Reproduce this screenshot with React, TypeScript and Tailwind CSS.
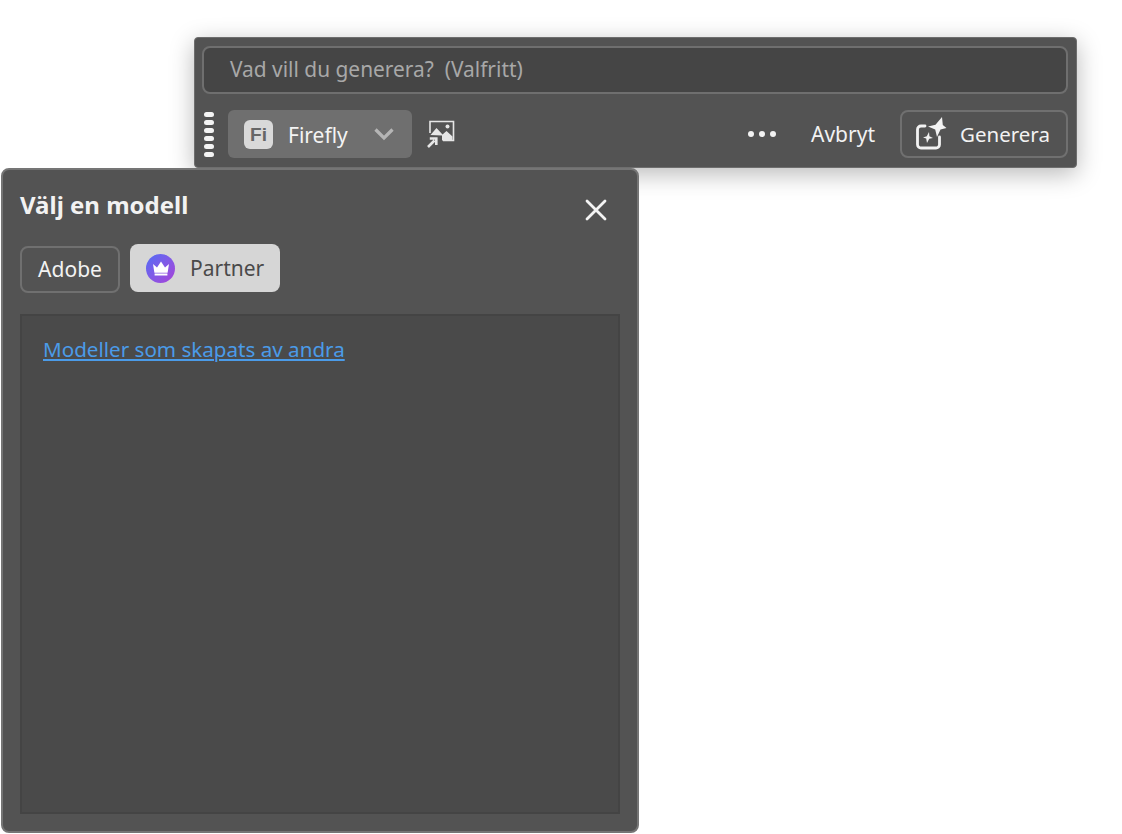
import React from "react";

const font = "font-['Noto_Sans','Lato',sans-serif]";

const GripDots: React.FC = () => (
  <div className="flex w-[10px] flex-col gap-[3px]">
    {[0, 1, 2, 3, 4, 5].map((i) => (
      <div key={i} className="h-[5px] w-[10px] rounded-full bg-[#f4f4f4]" />
    ))}
  </div>
);

const FireflyIcon: React.FC = () => (
  <div className="relative flex h-[29px] w-[29px] items-center justify-center rounded-[6px] bg-[#d9d9d9]">
    <span className="font-['Liberation_Sans',sans-serif] text-[19px] font-bold leading-none text-[#666666]">Fi</span>
    <div className="absolute right-[6px] top-[5px] h-[3px] w-[3px] rounded-full bg-[#d9d9d9]" />
  </div>
);

const ImageExpandIcon: React.FC = () => (
  <svg width="28" height="28" viewBox="0 0 28 28" fill="none">
    <path d="M3 13V1.5h23.5V20.5H16" stroke="#e6e6e6" strokeWidth="1.6" fill="none" />
    <path fillRule="evenodd" fill="#e6e6e6" d="M3.5 15l6-7 6 6.5 4-3.5 6 5.5v4H15V15.5z" />
    <circle cx="20.5" cy="6.5" r="2" fill="#e6e6e6" />
    <path d="M1 27l6.5-6.5M2.8 18.5h6.5v6.5" stroke="#e6e6e6" strokeWidth="2.6" fill="none" />
  </svg>
);

const GenerateIcon: React.FC = () => (
  <svg width="32" height="34" viewBox="0 0 32 34" fill="none">
    <path d="M10 9H6a3.5 3.5 0 0 0-3.5 3.5v15A3.5 3.5 0 0 0 6 31h15a3.5 3.5 0 0 0 3.5-3.5V20" stroke="#f2f2f2" strokeWidth="2.8" strokeLinecap="round" />
    <path fill="#f2f2f2" d="M27 0l.8 8 3.7 3-6 1.6L22 20l-1.8-7.4L13 9.6l7.5-1.8z" />
    <path fill="#f2f2f2" d="M14 15l.4 4.2 3.6 1.8-3.8.8L12 26l-.8-4.4L8 20.5l3.8-1.2z" />
  </svg>
);

const CrownBadge: React.FC = () => (
  <div className="flex h-[29px] w-[29px] items-center justify-center rounded-full bg-gradient-to-br from-[#4b6bf5] to-[#a63fd8]">
    <svg width="18" height="15" viewBox="0 0 18 15">
      <path fill="#fff" d="M1 3l4 3.5L9 .5l4 6L17 3l-1.4 8.8H2.4zM2.6 12.6h12.8V14.5H2.6z" />
    </svg>
  </div>
);

const Toolbar: React.FC = () => (
  <div className="ml-[194px] flex h-[131px] w-[883px] flex-col rounded-[4px] border border-[#6e6e6e] bg-[#535353] pl-[7px] pr-[8px] pt-[8px] shadow-[0_6px_24px_rgba(0,0,0,0.28)]">
    <div className="flex h-[48px] items-center rounded-[8px] border-2 border-[#6f6f6f] bg-[#454545] pl-[26px] text-[20.9px] text-[#a8a8a8]">
      <span className="whitespace-pre">Vad vill du generera?  (Valfritt)</span>
    </div>
    <div className="mt-[16px] flex items-center">
      <div className="ml-[2px]"><GripDots /></div>
      <button type="button" className="ml-[14px] flex h-[48px] w-[184px] items-center rounded-[6px] bg-[#6f6f6f] pl-[16px] text-[#f4f4f4]">
        <FireflyIcon />
        <span className="ml-[15px] mt-[4px] text-[21px]">Firefly</span>
        <svg className="ml-[25px]" width="22" height="14" viewBox="0 0 22 14" fill="none">
          <path d="M2.5 2.5L11 11l8.5-8.5" stroke="#b5b5b5" strokeWidth="3.2" />
        </svg>
      </button>
      <div className="ml-[15px] flex"><ImageExpandIcon /></div>
      <div className="ml-auto flex items-center gap-[5px]">
        {[0, 1, 2].map((i) => (
          <div key={i} className="h-[6px] w-[6px] rounded-full bg-[#f2f2f2]" />
        ))}
      </div>
      <span className="ml-[35px] mt-[2px] text-[21px] text-[#f2f2f2]">Avbryt</span>
      <button type="button" className="ml-[25px] flex h-[48px] w-[168px] items-center rounded-[8px] border-2 border-[#707070] pl-[13px] text-[#f2f2f2]">
        <GenerateIcon />
        <span className="ml-[13px] text-[20.5px]">Generera</span>
      </button>
    </div>
  </div>
);

const ModelPanel: React.FC = () => (
  <div className="ml-[1px] flex h-[665px] w-[638px] flex-col rounded-[8px] border-2 border-[#757575] bg-[#535353] pl-[17px] pr-[17px] pb-[17px]">
    <div className="flex h-[74px] items-center justify-between pb-[4px]">
      <h2 className="text-[24px] font-bold text-[#f2f2f2]">Välj en modell</h2>
      <svg className="mr-[13px] mt-[10px]" width="22" height="22" viewBox="0 0 22 22" fill="none">
        <path d="M2 2l18 18M20 2L2 20" stroke="#f4f4f4" strokeWidth="2.8" strokeLinecap="round" />
      </svg>
    </div>
    <div className="flex items-start gap-[10px]">
      <button type="button" className="mt-[2px] flex h-[47px] w-[100px] items-center justify-center rounded-[8px] border-2 border-[#707070] text-[21px] text-[#f2f2f2]">
        Adobe
      </button>
      <button type="button" className="flex h-[48px] w-[150px] items-center rounded-[8px] bg-[#d6d6d6] pl-[16px] text-[21px] text-[#4a4a4a]">
        <CrownBadge />
        <span className="ml-[15px] mt-[2px]">Partner</span>
      </button>
    </div>
    <div className="mt-[21px] flex-1 border-2 border-[#444444] bg-[#4a4a4a] px-[21px] pt-[18px]">
      <a href="#" className="text-[20.6px] leading-[30px] text-[#4b9be8] underline">Modeller som skapats av andra</a>
    </div>
  </div>
);

export default function App() {
  return (
    <div className={`${font} h-[834px] w-[1122px] overflow-hidden bg-white pt-[37px]`}>
      <Toolbar />
      <ModelPanel />
    </div>
  );
}
